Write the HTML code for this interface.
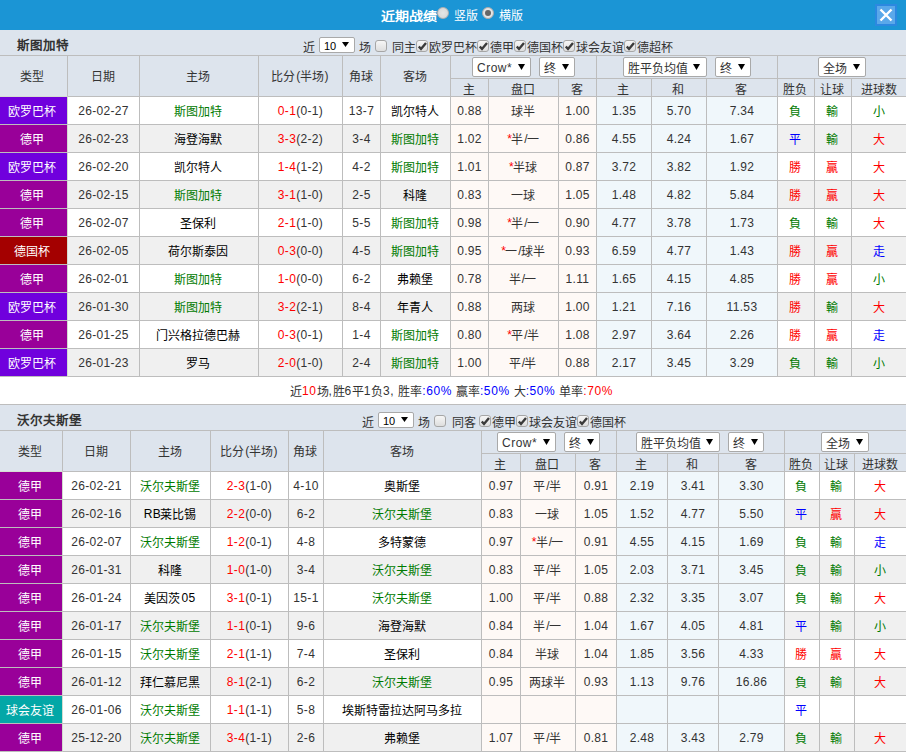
<!DOCTYPE html><html lang="zh-CN"><head><meta charset="utf-8"><title>近期战绩</title><style>
*{margin:0;padding:0;box-sizing:border-box}
html,body{width:906px;height:753px;overflow:hidden;background:#fff}
body{position:relative;font-family:"Liberation Sans",sans-serif;font-size:12px;color:#333}
.c{position:absolute;border-right:1px solid #bdbdbd;border-bottom:1px solid #bdbdbd;text-align:center;white-space:nowrap;overflow:hidden;letter-spacing:0.33px}
.t{position:absolute;white-space:nowrap}
.sel{position:absolute;background:#fff;border:1px solid #a9a9a9;border-radius:2px;height:20px;line-height:20px;padding-left:4px;white-space:nowrap;letter-spacing:0.5px}
.sel i{position:absolute;font-style:normal;font-size:8px;top:0}
.cb{position:absolute;width:12px;height:12px;border:1px solid #a6a6a6;border-radius:3px;background:linear-gradient(#f6f6f6,#dedede)}
.s16{position:absolute;background:#fff;border:1px solid #a9a9a9;border-radius:2px;width:36px;height:16px;line-height:14px;padding-left:4px;padding-top:1px;font-size:11px;color:#000}
.k{position:relative;top:1px;letter-spacing:0}
.c .k{left:-1px}
.g{color:#007a00}.r{color:#ff0000}.b{color:#0000ff}
</style></head><body>
<div style="position:absolute;left:0;top:0;width:906px;height:30px;background:#1b95d5"></div>
<div class="t" style="left:381px;top:9px;font-size:14px;font-weight:bold;color:#fff;line-height:16px;transform:scaleY(0.88);transform-origin:0 0"><span class="k">近期战绩</span></div>
<div style="position:absolute;left:437px;top:7px;width:12px;height:12px;border-radius:50%;background:radial-gradient(#e6e6e6,#d4d4d4);border:1px solid #b0b0b0"></div>
<div class="t" style="left:454px;top:8px;color:#fff;line-height:14px"><span class="k">竖版</span></div>
<div style="position:absolute;left:482px;top:7px;width:12px;height:12px;border-radius:50%;background:#e4e4e4;border:1px solid #aaa"><div style="position:absolute;left:2px;top:2px;width:6px;height:6px;border-radius:50%;background:#666"></div></div>
<div class="t" style="left:499px;top:8px;color:#fff;line-height:14px"><span class="k">横版</span></div>
<div style="position:absolute;left:875px;top:4px;width:22px;height:22px;background:#5aa8ea;border:2px solid #2c88e0"><svg width="18" height="18" style="position:absolute;left:0;top:0"><path d="M3.5 3.5L14.5 14.5M14.5 3.5L3.5 14.5" stroke="#fff" stroke-width="2.4"/></svg></div>
<div class="c" style="left:0;top:30px;width:906px;height:26px;background:#dde4ed;border-right:0"></div>
<div class="t" style="left:17px;top:37px;font-size:12.5px;font-weight:bold;line-height:16px"><span class="k">斯图加特</span></div>
<div class="t" style="left:303px;top:40px;line-height:14px"><span class="k">近</span></div>
<div class="s16" style="left:319px;top:37px">10<svg width="7" height="5" style="position:absolute;left:22px;top:4px"><path d="M0 0H7L3.5 5Z" fill="#000"/></svg></div>
<div class="t" style="left:359px;top:40px;line-height:14px"><span class="k">场</span></div>
<div class="cb" style="left:375px;top:40px"></div>
<div class="t" style="left:392px;top:40px;line-height:14px"><span class="k">同主</span></div>
<div class="cb" style="left:416px;top:40px"><svg width="10" height="10" style="position:absolute;left:0;top:0"><path d="M1.8 5.5 L4 8 L9 2" stroke="#3a3a3a" stroke-width="2.4" fill="none"/></svg></div>
<div class="t" style="left:429px;top:40px;line-height:14px"><span class="k">欧罗巴杯</span></div>
<div class="cb" style="left:477px;top:40px"><svg width="10" height="10" style="position:absolute;left:0;top:0"><path d="M1.8 5.5 L4 8 L9 2" stroke="#3a3a3a" stroke-width="2.4" fill="none"/></svg></div>
<div class="t" style="left:490px;top:40px;line-height:14px"><span class="k">德甲</span></div>
<div class="cb" style="left:514px;top:40px"><svg width="10" height="10" style="position:absolute;left:0;top:0"><path d="M1.8 5.5 L4 8 L9 2" stroke="#3a3a3a" stroke-width="2.4" fill="none"/></svg></div>
<div class="t" style="left:527px;top:40px;line-height:14px"><span class="k">德国杯</span></div>
<div class="cb" style="left:563px;top:40px"><svg width="10" height="10" style="position:absolute;left:0;top:0"><path d="M1.8 5.5 L4 8 L9 2" stroke="#3a3a3a" stroke-width="2.4" fill="none"/></svg></div>
<div class="t" style="left:576px;top:40px;line-height:14px"><span class="k">球会友谊</span></div>
<div class="cb" style="left:624px;top:40px"><svg width="10" height="10" style="position:absolute;left:0;top:0"><path d="M1.8 5.5 L4 8 L9 2" stroke="#3a3a3a" stroke-width="2.4" fill="none"/></svg></div>
<div class="t" style="left:637px;top:40px;line-height:14px"><span class="k">德超杯</span></div>
<div class="c" style="left:0px;top:56px;width:68px;height:41px;line-height:42px;background:#dde4ed;padding-right:1px;border-bottom-color:#d6ddd3;line-height:40px;"><span class="k">类型</span></div>
<div class="c" style="left:68px;top:56px;width:72px;height:41px;line-height:42px;background:#dde4ed;line-height:40px;"><span class="k">日期</span></div>
<div class="c" style="left:140px;top:56px;width:119px;height:41px;line-height:42px;background:#dde4ed;line-height:40px;"><span class="k">主场</span></div>
<div class="c" style="left:259px;top:56px;width:84px;height:41px;line-height:42px;background:#dde4ed;line-height:40px;"><span class="k">比分</span>(<span class="k">半场</span>)</div>
<div class="c" style="left:343px;top:56px;width:38px;height:41px;line-height:42px;background:#dde4ed;line-height:40px;"><span class="k">角球</span></div>
<div class="c" style="left:381px;top:56px;width:70px;height:41px;line-height:42px;background:#dde4ed;line-height:40px;"><span class="k">客场</span></div>
<div class="c" style="left:451px;top:56px;width:146px;height:23px;line-height:24px;background:#dde4ed;"></div>
<div class="c" style="left:597px;top:56px;width:181px;height:23px;line-height:24px;background:#dde4ed;"></div>
<div class="c" style="left:778px;top:56px;width:129px;height:23px;line-height:24px;background:#dde4ed;border-right:0;"></div>
<div class="c" style="left:451px;top:79px;width:38px;height:18px;line-height:19px;background:#dde4ed;line-height:17px;padding-top:2px;"><span class="k">主</span></div>
<div class="c" style="left:489px;top:79px;width:70px;height:18px;line-height:19px;background:#dde4ed;line-height:17px;padding-top:2px;"><span class="k">盘口</span></div>
<div class="c" style="left:559px;top:79px;width:38px;height:18px;line-height:19px;background:#dde4ed;line-height:17px;padding-top:2px;"><span class="k">客</span></div>
<div class="c" style="left:597px;top:79px;width:55px;height:18px;line-height:19px;background:#dde4ed;line-height:17px;padding-top:2px;"><span class="k">主</span></div>
<div class="c" style="left:652px;top:79px;width:55px;height:18px;line-height:19px;background:#dde4ed;line-height:17px;padding-top:2px;"><span class="k">和</span></div>
<div class="c" style="left:707px;top:79px;width:71px;height:18px;line-height:19px;background:#dde4ed;line-height:17px;padding-top:2px;"><span class="k">客</span></div>
<div class="c" style="left:778px;top:79px;width:37px;height:18px;line-height:19px;background:#dde4ed;line-height:17px;padding-top:2px;"><span class="k">胜负</span></div>
<div class="c" style="left:815px;top:79px;width:37px;height:18px;line-height:19px;background:#dde4ed;line-height:17px;padding-top:2px;"><span class="k">让球</span></div>
<div class="c" style="left:852px;top:79px;width:55px;height:18px;line-height:19px;background:#dde4ed;border-right:0;line-height:17px;padding-top:2px;"><span class="k">进球数</span></div>
<div class="sel" style="left:472px;top:57px;width:59px">Crow*<svg width="7" height="6" style="position:absolute;left:45px;top:6px"><path d="M0 0H7L3.5 6Z" fill="#000"/></svg></div>
<div class="sel" style="left:539px;top:57px;width:36px"><span class="k">终</span><svg width="7" height="6" style="position:absolute;left:22px;top:6px"><path d="M0 0H7L3.5 6Z" fill="#000"/></svg></div>
<div class="sel" style="left:623px;top:57px;width:84px"><span class="k">胜平负均值</span><svg width="7" height="6" style="position:absolute;left:69px;top:6px"><path d="M0 0H7L3.5 6Z" fill="#000"/></svg></div>
<div class="sel" style="left:715px;top:57px;width:36px"><span class="k">终</span><svg width="7" height="6" style="position:absolute;left:22px;top:6px"><path d="M0 0H7L3.5 6Z" fill="#000"/></svg></div>
<div class="sel" style="left:818px;top:57px;width:48px"><span class="k">全场</span><svg width="7" height="6" style="position:absolute;left:34px;top:6px"><path d="M0 0H7L3.5 6Z" fill="#000"/></svg></div>
<div class="c" style="left:0px;top:97px;width:68px;height:28px;line-height:29px;background:#7000dd;color:#fff;padding-right:1px;border-right-color:#d3dccf;"><span class="k">欧罗巴杯</span></div>
<div class="c" style="left:68px;top:97px;width:72px;height:28px;line-height:29px;background:#fff;">26-02-27</div>
<div class="c" style="left:140px;top:97px;width:119px;height:28px;line-height:29px;background:#fff;color:#007a00;"><span class="k">斯图加特</span></div>
<div class="c" style="left:259px;top:97px;width:84px;height:28px;line-height:29px;background:#fff;"><span class="r">0-1</span>(0-1)</div>
<div class="c" style="left:343px;top:97px;width:38px;height:28px;line-height:29px;background:#fff;">13-7</div>
<div class="c" style="left:381px;top:97px;width:70px;height:28px;line-height:29px;background:#fff;color:#000;"><span class="k">凯尔特人</span></div>
<div class="c" style="left:451px;top:97px;width:38px;height:28px;line-height:29px;background:#fef9f6;">0.88</div>
<div class="c" style="left:489px;top:97px;width:70px;height:28px;line-height:29px;background:#fef9f6;"><span class="k">球半</span></div>
<div class="c" style="left:559px;top:97px;width:38px;height:28px;line-height:29px;background:#fef9f6;">1.00</div>
<div class="c" style="left:597px;top:97px;width:55px;height:28px;line-height:29px;background:#f0f7fb;">1.35</div>
<div class="c" style="left:652px;top:97px;width:55px;height:28px;line-height:29px;background:#f0f7fb;">5.70</div>
<div class="c" style="left:707px;top:97px;width:71px;height:28px;line-height:29px;background:#f0f7fb;">7.34</div>
<div class="c" style="left:778px;top:97px;width:37px;height:28px;line-height:29px;background:#fff;"><span class="g"><span class="k">負</span></span></div>
<div class="c" style="left:815px;top:97px;width:37px;height:28px;line-height:29px;background:#fff;"><span class="g"><span class="k">輸</span></span></div>
<div class="c" style="left:852px;top:97px;width:55px;height:28px;line-height:29px;background:#fff;border-right:0;"><span class="g"><span class="k">小</span></span></div>
<div class="c" style="left:0px;top:125px;width:68px;height:28px;line-height:29px;background:#990099;color:#fff;padding-right:1px;border-right-color:#d3dccf;"><span class="k">德甲</span></div>
<div class="c" style="left:68px;top:125px;width:72px;height:28px;line-height:29px;background:#f0f0f0;">26-02-23</div>
<div class="c" style="left:140px;top:125px;width:119px;height:28px;line-height:29px;background:#f0f0f0;color:#000;"><span class="k">海登海默</span></div>
<div class="c" style="left:259px;top:125px;width:84px;height:28px;line-height:29px;background:#f0f0f0;"><span class="r">3-3</span>(2-2)</div>
<div class="c" style="left:343px;top:125px;width:38px;height:28px;line-height:29px;background:#f0f0f0;">3-4</div>
<div class="c" style="left:381px;top:125px;width:70px;height:28px;line-height:29px;background:#f0f0f0;color:#007a00;"><span class="k">斯图加特</span></div>
<div class="c" style="left:451px;top:125px;width:38px;height:28px;line-height:29px;background:#fef9f6;">1.02</div>
<div class="c" style="left:489px;top:125px;width:70px;height:28px;line-height:29px;background:#fef9f6;"><span class="r">*</span><span class="k">半</span>/<span class="k">一</span></div>
<div class="c" style="left:559px;top:125px;width:38px;height:28px;line-height:29px;background:#fef9f6;">0.86</div>
<div class="c" style="left:597px;top:125px;width:55px;height:28px;line-height:29px;background:#f0f7fb;">4.55</div>
<div class="c" style="left:652px;top:125px;width:55px;height:28px;line-height:29px;background:#f0f7fb;">4.24</div>
<div class="c" style="left:707px;top:125px;width:71px;height:28px;line-height:29px;background:#f0f7fb;">1.67</div>
<div class="c" style="left:778px;top:125px;width:37px;height:28px;line-height:29px;background:#f0f0f0;"><span class="b"><span class="k">平</span></span></div>
<div class="c" style="left:815px;top:125px;width:37px;height:28px;line-height:29px;background:#f0f0f0;"><span class="g"><span class="k">輸</span></span></div>
<div class="c" style="left:852px;top:125px;width:55px;height:28px;line-height:29px;background:#f0f0f0;border-right:0;"><span class="r"><span class="k">大</span></span></div>
<div class="c" style="left:0px;top:153px;width:68px;height:28px;line-height:29px;background:#7000dd;color:#fff;padding-right:1px;border-right-color:#d3dccf;"><span class="k">欧罗巴杯</span></div>
<div class="c" style="left:68px;top:153px;width:72px;height:28px;line-height:29px;background:#fff;">26-02-20</div>
<div class="c" style="left:140px;top:153px;width:119px;height:28px;line-height:29px;background:#fff;color:#000;"><span class="k">凯尔特人</span></div>
<div class="c" style="left:259px;top:153px;width:84px;height:28px;line-height:29px;background:#fff;"><span class="r">1-4</span>(1-2)</div>
<div class="c" style="left:343px;top:153px;width:38px;height:28px;line-height:29px;background:#fff;">4-2</div>
<div class="c" style="left:381px;top:153px;width:70px;height:28px;line-height:29px;background:#fff;color:#007a00;"><span class="k">斯图加特</span></div>
<div class="c" style="left:451px;top:153px;width:38px;height:28px;line-height:29px;background:#fef9f6;">1.01</div>
<div class="c" style="left:489px;top:153px;width:70px;height:28px;line-height:29px;background:#fef9f6;"><span class="r">*</span><span class="k">半球</span></div>
<div class="c" style="left:559px;top:153px;width:38px;height:28px;line-height:29px;background:#fef9f6;">0.87</div>
<div class="c" style="left:597px;top:153px;width:55px;height:28px;line-height:29px;background:#f0f7fb;">3.72</div>
<div class="c" style="left:652px;top:153px;width:55px;height:28px;line-height:29px;background:#f0f7fb;">3.82</div>
<div class="c" style="left:707px;top:153px;width:71px;height:28px;line-height:29px;background:#f0f7fb;">1.92</div>
<div class="c" style="left:778px;top:153px;width:37px;height:28px;line-height:29px;background:#fff;"><span class="r"><span class="k">勝</span></span></div>
<div class="c" style="left:815px;top:153px;width:37px;height:28px;line-height:29px;background:#fff;"><span class="r"><span class="k">贏</span></span></div>
<div class="c" style="left:852px;top:153px;width:55px;height:28px;line-height:29px;background:#fff;border-right:0;"><span class="r"><span class="k">大</span></span></div>
<div class="c" style="left:0px;top:181px;width:68px;height:28px;line-height:29px;background:#990099;color:#fff;padding-right:1px;border-right-color:#d3dccf;"><span class="k">德甲</span></div>
<div class="c" style="left:68px;top:181px;width:72px;height:28px;line-height:29px;background:#f0f0f0;">26-02-15</div>
<div class="c" style="left:140px;top:181px;width:119px;height:28px;line-height:29px;background:#f0f0f0;color:#007a00;"><span class="k">斯图加特</span></div>
<div class="c" style="left:259px;top:181px;width:84px;height:28px;line-height:29px;background:#f0f0f0;"><span class="r">3-1</span>(1-0)</div>
<div class="c" style="left:343px;top:181px;width:38px;height:28px;line-height:29px;background:#f0f0f0;">2-5</div>
<div class="c" style="left:381px;top:181px;width:70px;height:28px;line-height:29px;background:#f0f0f0;color:#000;"><span class="k">科隆</span></div>
<div class="c" style="left:451px;top:181px;width:38px;height:28px;line-height:29px;background:#fef9f6;">0.83</div>
<div class="c" style="left:489px;top:181px;width:70px;height:28px;line-height:29px;background:#fef9f6;"><span class="k">一球</span></div>
<div class="c" style="left:559px;top:181px;width:38px;height:28px;line-height:29px;background:#fef9f6;">1.05</div>
<div class="c" style="left:597px;top:181px;width:55px;height:28px;line-height:29px;background:#f0f7fb;">1.48</div>
<div class="c" style="left:652px;top:181px;width:55px;height:28px;line-height:29px;background:#f0f7fb;">4.82</div>
<div class="c" style="left:707px;top:181px;width:71px;height:28px;line-height:29px;background:#f0f7fb;">5.84</div>
<div class="c" style="left:778px;top:181px;width:37px;height:28px;line-height:29px;background:#f0f0f0;"><span class="r"><span class="k">勝</span></span></div>
<div class="c" style="left:815px;top:181px;width:37px;height:28px;line-height:29px;background:#f0f0f0;"><span class="r"><span class="k">贏</span></span></div>
<div class="c" style="left:852px;top:181px;width:55px;height:28px;line-height:29px;background:#f0f0f0;border-right:0;"><span class="r"><span class="k">大</span></span></div>
<div class="c" style="left:0px;top:209px;width:68px;height:28px;line-height:29px;background:#990099;color:#fff;padding-right:1px;border-right-color:#d3dccf;"><span class="k">德甲</span></div>
<div class="c" style="left:68px;top:209px;width:72px;height:28px;line-height:29px;background:#fff;">26-02-07</div>
<div class="c" style="left:140px;top:209px;width:119px;height:28px;line-height:29px;background:#fff;color:#000;"><span class="k">圣保利</span></div>
<div class="c" style="left:259px;top:209px;width:84px;height:28px;line-height:29px;background:#fff;"><span class="r">2-1</span>(1-0)</div>
<div class="c" style="left:343px;top:209px;width:38px;height:28px;line-height:29px;background:#fff;">5-5</div>
<div class="c" style="left:381px;top:209px;width:70px;height:28px;line-height:29px;background:#fff;color:#007a00;"><span class="k">斯图加特</span></div>
<div class="c" style="left:451px;top:209px;width:38px;height:28px;line-height:29px;background:#fef9f6;">0.98</div>
<div class="c" style="left:489px;top:209px;width:70px;height:28px;line-height:29px;background:#fef9f6;"><span class="r">*</span><span class="k">半</span>/<span class="k">一</span></div>
<div class="c" style="left:559px;top:209px;width:38px;height:28px;line-height:29px;background:#fef9f6;">0.90</div>
<div class="c" style="left:597px;top:209px;width:55px;height:28px;line-height:29px;background:#f0f7fb;">4.77</div>
<div class="c" style="left:652px;top:209px;width:55px;height:28px;line-height:29px;background:#f0f7fb;">3.78</div>
<div class="c" style="left:707px;top:209px;width:71px;height:28px;line-height:29px;background:#f0f7fb;">1.73</div>
<div class="c" style="left:778px;top:209px;width:37px;height:28px;line-height:29px;background:#fff;"><span class="g"><span class="k">負</span></span></div>
<div class="c" style="left:815px;top:209px;width:37px;height:28px;line-height:29px;background:#fff;"><span class="g"><span class="k">輸</span></span></div>
<div class="c" style="left:852px;top:209px;width:55px;height:28px;line-height:29px;background:#fff;border-right:0;"><span class="r"><span class="k">大</span></span></div>
<div class="c" style="left:0px;top:237px;width:68px;height:28px;line-height:29px;background:#a40000;color:#fff;padding-right:1px;border-right-color:#d3dccf;"><span class="k">德国杯</span></div>
<div class="c" style="left:68px;top:237px;width:72px;height:28px;line-height:29px;background:#f0f0f0;">26-02-05</div>
<div class="c" style="left:140px;top:237px;width:119px;height:28px;line-height:29px;background:#f0f0f0;color:#000;"><span class="k">荷尔斯泰因</span></div>
<div class="c" style="left:259px;top:237px;width:84px;height:28px;line-height:29px;background:#f0f0f0;"><span class="r">0-3</span>(0-0)</div>
<div class="c" style="left:343px;top:237px;width:38px;height:28px;line-height:29px;background:#f0f0f0;">4-5</div>
<div class="c" style="left:381px;top:237px;width:70px;height:28px;line-height:29px;background:#f0f0f0;color:#007a00;"><span class="k">斯图加特</span></div>
<div class="c" style="left:451px;top:237px;width:38px;height:28px;line-height:29px;background:#fef9f6;">0.95</div>
<div class="c" style="left:489px;top:237px;width:70px;height:28px;line-height:29px;background:#fef9f6;"><span class="r">*</span><span class="k">一</span>/<span class="k">球半</span></div>
<div class="c" style="left:559px;top:237px;width:38px;height:28px;line-height:29px;background:#fef9f6;">0.93</div>
<div class="c" style="left:597px;top:237px;width:55px;height:28px;line-height:29px;background:#f0f7fb;">6.59</div>
<div class="c" style="left:652px;top:237px;width:55px;height:28px;line-height:29px;background:#f0f7fb;">4.77</div>
<div class="c" style="left:707px;top:237px;width:71px;height:28px;line-height:29px;background:#f0f7fb;">1.43</div>
<div class="c" style="left:778px;top:237px;width:37px;height:28px;line-height:29px;background:#f0f0f0;"><span class="r"><span class="k">勝</span></span></div>
<div class="c" style="left:815px;top:237px;width:37px;height:28px;line-height:29px;background:#f0f0f0;"><span class="r"><span class="k">贏</span></span></div>
<div class="c" style="left:852px;top:237px;width:55px;height:28px;line-height:29px;background:#f0f0f0;border-right:0;"><span class="b"><span class="k">走</span></span></div>
<div class="c" style="left:0px;top:265px;width:68px;height:28px;line-height:29px;background:#990099;color:#fff;padding-right:1px;border-right-color:#d3dccf;"><span class="k">德甲</span></div>
<div class="c" style="left:68px;top:265px;width:72px;height:28px;line-height:29px;background:#fff;">26-02-01</div>
<div class="c" style="left:140px;top:265px;width:119px;height:28px;line-height:29px;background:#fff;color:#007a00;"><span class="k">斯图加特</span></div>
<div class="c" style="left:259px;top:265px;width:84px;height:28px;line-height:29px;background:#fff;"><span class="r">1-0</span>(0-0)</div>
<div class="c" style="left:343px;top:265px;width:38px;height:28px;line-height:29px;background:#fff;">6-2</div>
<div class="c" style="left:381px;top:265px;width:70px;height:28px;line-height:29px;background:#fff;color:#000;"><span class="k">弗赖堡</span></div>
<div class="c" style="left:451px;top:265px;width:38px;height:28px;line-height:29px;background:#fef9f6;">0.78</div>
<div class="c" style="left:489px;top:265px;width:70px;height:28px;line-height:29px;background:#fef9f6;"><span class="k">半</span>/<span class="k">一</span></div>
<div class="c" style="left:559px;top:265px;width:38px;height:28px;line-height:29px;background:#fef9f6;">1.11</div>
<div class="c" style="left:597px;top:265px;width:55px;height:28px;line-height:29px;background:#f0f7fb;">1.65</div>
<div class="c" style="left:652px;top:265px;width:55px;height:28px;line-height:29px;background:#f0f7fb;">4.15</div>
<div class="c" style="left:707px;top:265px;width:71px;height:28px;line-height:29px;background:#f0f7fb;">4.85</div>
<div class="c" style="left:778px;top:265px;width:37px;height:28px;line-height:29px;background:#fff;"><span class="r"><span class="k">勝</span></span></div>
<div class="c" style="left:815px;top:265px;width:37px;height:28px;line-height:29px;background:#fff;"><span class="r"><span class="k">贏</span></span></div>
<div class="c" style="left:852px;top:265px;width:55px;height:28px;line-height:29px;background:#fff;border-right:0;"><span class="g"><span class="k">小</span></span></div>
<div class="c" style="left:0px;top:293px;width:68px;height:28px;line-height:29px;background:#7000dd;color:#fff;padding-right:1px;border-right-color:#d3dccf;"><span class="k">欧罗巴杯</span></div>
<div class="c" style="left:68px;top:293px;width:72px;height:28px;line-height:29px;background:#f0f0f0;">26-01-30</div>
<div class="c" style="left:140px;top:293px;width:119px;height:28px;line-height:29px;background:#f0f0f0;color:#007a00;"><span class="k">斯图加特</span></div>
<div class="c" style="left:259px;top:293px;width:84px;height:28px;line-height:29px;background:#f0f0f0;"><span class="r">3-2</span>(2-1)</div>
<div class="c" style="left:343px;top:293px;width:38px;height:28px;line-height:29px;background:#f0f0f0;">8-4</div>
<div class="c" style="left:381px;top:293px;width:70px;height:28px;line-height:29px;background:#f0f0f0;color:#000;"><span class="k">年青人</span></div>
<div class="c" style="left:451px;top:293px;width:38px;height:28px;line-height:29px;background:#fef9f6;">0.88</div>
<div class="c" style="left:489px;top:293px;width:70px;height:28px;line-height:29px;background:#fef9f6;"><span class="k">两球</span></div>
<div class="c" style="left:559px;top:293px;width:38px;height:28px;line-height:29px;background:#fef9f6;">1.00</div>
<div class="c" style="left:597px;top:293px;width:55px;height:28px;line-height:29px;background:#f0f7fb;">1.21</div>
<div class="c" style="left:652px;top:293px;width:55px;height:28px;line-height:29px;background:#f0f7fb;">7.16</div>
<div class="c" style="left:707px;top:293px;width:71px;height:28px;line-height:29px;background:#f0f7fb;">11.53</div>
<div class="c" style="left:778px;top:293px;width:37px;height:28px;line-height:29px;background:#f0f0f0;"><span class="r"><span class="k">勝</span></span></div>
<div class="c" style="left:815px;top:293px;width:37px;height:28px;line-height:29px;background:#f0f0f0;"><span class="g"><span class="k">輸</span></span></div>
<div class="c" style="left:852px;top:293px;width:55px;height:28px;line-height:29px;background:#f0f0f0;border-right:0;"><span class="r"><span class="k">大</span></span></div>
<div class="c" style="left:0px;top:321px;width:68px;height:28px;line-height:29px;background:#990099;color:#fff;padding-right:1px;border-right-color:#d3dccf;"><span class="k">德甲</span></div>
<div class="c" style="left:68px;top:321px;width:72px;height:28px;line-height:29px;background:#fff;">26-01-25</div>
<div class="c" style="left:140px;top:321px;width:119px;height:28px;line-height:29px;background:#fff;color:#000;"><span class="k">门兴格拉德巴赫</span></div>
<div class="c" style="left:259px;top:321px;width:84px;height:28px;line-height:29px;background:#fff;"><span class="r">0-3</span>(0-1)</div>
<div class="c" style="left:343px;top:321px;width:38px;height:28px;line-height:29px;background:#fff;">1-4</div>
<div class="c" style="left:381px;top:321px;width:70px;height:28px;line-height:29px;background:#fff;color:#007a00;"><span class="k">斯图加特</span></div>
<div class="c" style="left:451px;top:321px;width:38px;height:28px;line-height:29px;background:#fef9f6;">0.80</div>
<div class="c" style="left:489px;top:321px;width:70px;height:28px;line-height:29px;background:#fef9f6;"><span class="r">*</span><span class="k">平</span>/<span class="k">半</span></div>
<div class="c" style="left:559px;top:321px;width:38px;height:28px;line-height:29px;background:#fef9f6;">1.08</div>
<div class="c" style="left:597px;top:321px;width:55px;height:28px;line-height:29px;background:#f0f7fb;">2.97</div>
<div class="c" style="left:652px;top:321px;width:55px;height:28px;line-height:29px;background:#f0f7fb;">3.64</div>
<div class="c" style="left:707px;top:321px;width:71px;height:28px;line-height:29px;background:#f0f7fb;">2.26</div>
<div class="c" style="left:778px;top:321px;width:37px;height:28px;line-height:29px;background:#fff;"><span class="r"><span class="k">勝</span></span></div>
<div class="c" style="left:815px;top:321px;width:37px;height:28px;line-height:29px;background:#fff;"><span class="r"><span class="k">贏</span></span></div>
<div class="c" style="left:852px;top:321px;width:55px;height:28px;line-height:29px;background:#fff;border-right:0;"><span class="b"><span class="k">走</span></span></div>
<div class="c" style="left:0px;top:349px;width:68px;height:28px;line-height:29px;background:#7000dd;color:#fff;padding-right:1px;border-right-color:#d3dccf;"><span class="k">欧罗巴杯</span></div>
<div class="c" style="left:68px;top:349px;width:72px;height:28px;line-height:29px;background:#f0f0f0;">26-01-23</div>
<div class="c" style="left:140px;top:349px;width:119px;height:28px;line-height:29px;background:#f0f0f0;color:#000;"><span class="k">罗马</span></div>
<div class="c" style="left:259px;top:349px;width:84px;height:28px;line-height:29px;background:#f0f0f0;"><span class="r">2-0</span>(1-0)</div>
<div class="c" style="left:343px;top:349px;width:38px;height:28px;line-height:29px;background:#f0f0f0;">2-4</div>
<div class="c" style="left:381px;top:349px;width:70px;height:28px;line-height:29px;background:#f0f0f0;color:#007a00;"><span class="k">斯图加特</span></div>
<div class="c" style="left:451px;top:349px;width:38px;height:28px;line-height:29px;background:#fef9f6;">1.00</div>
<div class="c" style="left:489px;top:349px;width:70px;height:28px;line-height:29px;background:#fef9f6;"><span class="k">平</span>/<span class="k">半</span></div>
<div class="c" style="left:559px;top:349px;width:38px;height:28px;line-height:29px;background:#fef9f6;">0.88</div>
<div class="c" style="left:597px;top:349px;width:55px;height:28px;line-height:29px;background:#f0f7fb;">2.17</div>
<div class="c" style="left:652px;top:349px;width:55px;height:28px;line-height:29px;background:#f0f7fb;">3.45</div>
<div class="c" style="left:707px;top:349px;width:71px;height:28px;line-height:29px;background:#f0f7fb;">3.29</div>
<div class="c" style="left:778px;top:349px;width:37px;height:28px;line-height:29px;background:#f0f0f0;"><span class="g"><span class="k">負</span></span></div>
<div class="c" style="left:815px;top:349px;width:37px;height:28px;line-height:29px;background:#f0f0f0;"><span class="g"><span class="k">輸</span></span></div>
<div class="c" style="left:852px;top:349px;width:55px;height:28px;line-height:29px;background:#f0f0f0;border-right:0;"><span class="g"><span class="k">小</span></span></div>
<div class="t" style="left:290px;top:383px;line-height:16px;color:#333;letter-spacing:0.6px"><span class="k">近</span><span class="r">10</span><span class="k">场</span>,<span class="k">胜</span>6<span class="k">平</span>1<span class="k">负</span>3, <span class="k">胜率</span><span class="b">:60%</span> <span class="k">赢率</span><span class="b">:50%</span> <span class="k">大</span><span class="b">:50%</span> <span class="k">单率</span><span class="r">:70%</span></div>
<div style="position:absolute;left:0;top:404px;width:906px;height:1px;background:#bdbdbd"></div>
<div class="c" style="left:0;top:405px;width:906px;height:26px;background:#dde4ed;border-right:0"></div>
<div class="t" style="left:17px;top:412px;font-size:12.5px;font-weight:bold;line-height:16px"><span class="k">沃尔夫斯堡</span></div>
<div class="t" style="left:362px;top:415px;line-height:14px"><span class="k">近</span></div>
<div class="s16" style="left:378px;top:412px">10<svg width="7" height="5" style="position:absolute;left:22px;top:4px"><path d="M0 0H7L3.5 5Z" fill="#000"/></svg></div>
<div class="t" style="left:418px;top:415px;line-height:14px"><span class="k">场</span></div>
<div class="cb" style="left:434px;top:415px"></div>
<div class="t" style="left:452px;top:415px;line-height:14px"><span class="k">同客</span></div>
<div class="cb" style="left:479px;top:415px"><svg width="10" height="10" style="position:absolute;left:0;top:0"><path d="M1.8 5.5 L4 8 L9 2" stroke="#3a3a3a" stroke-width="2.4" fill="none"/></svg></div>
<div class="t" style="left:492px;top:415px;line-height:14px"><span class="k">德甲</span></div>
<div class="cb" style="left:516px;top:415px"><svg width="10" height="10" style="position:absolute;left:0;top:0"><path d="M1.8 5.5 L4 8 L9 2" stroke="#3a3a3a" stroke-width="2.4" fill="none"/></svg></div>
<div class="t" style="left:529px;top:415px;line-height:14px"><span class="k">球会友谊</span></div>
<div class="cb" style="left:577px;top:415px"><svg width="10" height="10" style="position:absolute;left:0;top:0"><path d="M1.8 5.5 L4 8 L9 2" stroke="#3a3a3a" stroke-width="2.4" fill="none"/></svg></div>
<div class="t" style="left:590px;top:415px;line-height:14px"><span class="k">德国杯</span></div>
<div class="c" style="left:0px;top:431px;width:63px;height:41px;line-height:42px;background:#dde4ed;padding-right:1px;border-bottom-color:#d6ddd3;line-height:40px;"><span class="k">类型</span></div>
<div class="c" style="left:63px;top:431px;width:68px;height:41px;line-height:42px;background:#dde4ed;line-height:40px;"><span class="k">日期</span></div>
<div class="c" style="left:131px;top:431px;width:80px;height:41px;line-height:42px;background:#dde4ed;line-height:40px;"><span class="k">主场</span></div>
<div class="c" style="left:211px;top:431px;width:78px;height:41px;line-height:42px;background:#dde4ed;line-height:40px;"><span class="k">比分</span>(<span class="k">半场</span>)</div>
<div class="c" style="left:289px;top:431px;width:35px;height:41px;line-height:42px;background:#dde4ed;line-height:40px;"><span class="k">角球</span></div>
<div class="c" style="left:324px;top:431px;width:158px;height:41px;line-height:42px;background:#dde4ed;line-height:40px;"><span class="k">客场</span></div>
<div class="c" style="left:482px;top:431px;width:135px;height:23px;line-height:24px;background:#dde4ed;"></div>
<div class="c" style="left:617px;top:431px;width:168px;height:23px;line-height:24px;background:#dde4ed;"></div>
<div class="c" style="left:785px;top:431px;width:122px;height:23px;line-height:24px;background:#dde4ed;border-right:0;"></div>
<div class="c" style="left:482px;top:454px;width:39px;height:18px;line-height:19px;background:#dde4ed;line-height:17px;padding-top:2px;"><span class="k">主</span></div>
<div class="c" style="left:521px;top:454px;width:55px;height:18px;line-height:19px;background:#dde4ed;line-height:17px;padding-top:2px;"><span class="k">盘口</span></div>
<div class="c" style="left:576px;top:454px;width:41px;height:18px;line-height:19px;background:#dde4ed;line-height:17px;padding-top:2px;"><span class="k">客</span></div>
<div class="c" style="left:617px;top:454px;width:51px;height:18px;line-height:19px;background:#dde4ed;line-height:17px;padding-top:2px;"><span class="k">主</span></div>
<div class="c" style="left:668px;top:454px;width:51px;height:18px;line-height:19px;background:#dde4ed;line-height:17px;padding-top:2px;"><span class="k">和</span></div>
<div class="c" style="left:719px;top:454px;width:66px;height:18px;line-height:19px;background:#dde4ed;line-height:17px;padding-top:2px;"><span class="k">客</span></div>
<div class="c" style="left:785px;top:454px;width:35px;height:18px;line-height:19px;background:#dde4ed;line-height:17px;padding-top:2px;"><span class="k">胜负</span></div>
<div class="c" style="left:820px;top:454px;width:35px;height:18px;line-height:19px;background:#dde4ed;line-height:17px;padding-top:2px;"><span class="k">让球</span></div>
<div class="c" style="left:855px;top:454px;width:52px;height:18px;line-height:19px;background:#dde4ed;border-right:0;line-height:17px;padding-top:2px;"><span class="k">进球数</span></div>
<div class="sel" style="left:497px;top:432px;width:59px">Crow*<svg width="7" height="6" style="position:absolute;left:45px;top:6px"><path d="M0 0H7L3.5 6Z" fill="#000"/></svg></div>
<div class="sel" style="left:564px;top:432px;width:36px"><span class="k">终</span><svg width="7" height="6" style="position:absolute;left:22px;top:6px"><path d="M0 0H7L3.5 6Z" fill="#000"/></svg></div>
<div class="sel" style="left:636px;top:432px;width:84px"><span class="k">胜平负均值</span><svg width="7" height="6" style="position:absolute;left:69px;top:6px"><path d="M0 0H7L3.5 6Z" fill="#000"/></svg></div>
<div class="sel" style="left:728px;top:432px;width:36px"><span class="k">终</span><svg width="7" height="6" style="position:absolute;left:22px;top:6px"><path d="M0 0H7L3.5 6Z" fill="#000"/></svg></div>
<div class="sel" style="left:821px;top:432px;width:48px"><span class="k">全场</span><svg width="7" height="6" style="position:absolute;left:34px;top:6px"><path d="M0 0H7L3.5 6Z" fill="#000"/></svg></div>
<div class="c" style="left:0px;top:472px;width:63px;height:28px;line-height:29px;background:#990099;color:#fff;padding-right:1px;border-right-color:#d3dccf;"><span class="k">德甲</span></div>
<div class="c" style="left:63px;top:472px;width:68px;height:28px;line-height:29px;background:#fff;">26-02-21</div>
<div class="c" style="left:131px;top:472px;width:80px;height:28px;line-height:29px;background:#fff;color:#007a00;"><span class="k">沃尔夫斯堡</span></div>
<div class="c" style="left:211px;top:472px;width:78px;height:28px;line-height:29px;background:#fff;"><span class="r">2-3</span>(1-0)</div>
<div class="c" style="left:289px;top:472px;width:35px;height:28px;line-height:29px;background:#fff;">4-10</div>
<div class="c" style="left:324px;top:472px;width:158px;height:28px;line-height:29px;background:#fff;color:#000;"><span class="k">奥斯堡</span></div>
<div class="c" style="left:482px;top:472px;width:39px;height:28px;line-height:29px;background:#fef9f6;">0.97</div>
<div class="c" style="left:521px;top:472px;width:55px;height:28px;line-height:29px;background:#fef9f6;"><span class="k">平</span>/<span class="k">半</span></div>
<div class="c" style="left:576px;top:472px;width:41px;height:28px;line-height:29px;background:#fef9f6;">0.91</div>
<div class="c" style="left:617px;top:472px;width:51px;height:28px;line-height:29px;background:#f0f7fb;">2.19</div>
<div class="c" style="left:668px;top:472px;width:51px;height:28px;line-height:29px;background:#f0f7fb;">3.41</div>
<div class="c" style="left:719px;top:472px;width:66px;height:28px;line-height:29px;background:#f0f7fb;">3.30</div>
<div class="c" style="left:785px;top:472px;width:35px;height:28px;line-height:29px;background:#fff;"><span class="g"><span class="k">負</span></span></div>
<div class="c" style="left:820px;top:472px;width:35px;height:28px;line-height:29px;background:#fff;"><span class="g"><span class="k">輸</span></span></div>
<div class="c" style="left:855px;top:472px;width:52px;height:28px;line-height:29px;background:#fff;border-right:0;"><span class="r"><span class="k">大</span></span></div>
<div class="c" style="left:0px;top:500px;width:63px;height:28px;line-height:29px;background:#990099;color:#fff;padding-right:1px;border-right-color:#d3dccf;"><span class="k">德甲</span></div>
<div class="c" style="left:63px;top:500px;width:68px;height:28px;line-height:29px;background:#f0f0f0;">26-02-16</div>
<div class="c" style="left:131px;top:500px;width:80px;height:28px;line-height:29px;background:#f0f0f0;color:#000;">RB<span class="k">莱比锡</span></div>
<div class="c" style="left:211px;top:500px;width:78px;height:28px;line-height:29px;background:#f0f0f0;"><span class="r">2-2</span>(0-0)</div>
<div class="c" style="left:289px;top:500px;width:35px;height:28px;line-height:29px;background:#f0f0f0;">6-2</div>
<div class="c" style="left:324px;top:500px;width:158px;height:28px;line-height:29px;background:#f0f0f0;color:#007a00;"><span class="k">沃尔夫斯堡</span></div>
<div class="c" style="left:482px;top:500px;width:39px;height:28px;line-height:29px;background:#fef9f6;">0.83</div>
<div class="c" style="left:521px;top:500px;width:55px;height:28px;line-height:29px;background:#fef9f6;"><span class="k">一球</span></div>
<div class="c" style="left:576px;top:500px;width:41px;height:28px;line-height:29px;background:#fef9f6;">1.05</div>
<div class="c" style="left:617px;top:500px;width:51px;height:28px;line-height:29px;background:#f0f7fb;">1.52</div>
<div class="c" style="left:668px;top:500px;width:51px;height:28px;line-height:29px;background:#f0f7fb;">4.77</div>
<div class="c" style="left:719px;top:500px;width:66px;height:28px;line-height:29px;background:#f0f7fb;">5.50</div>
<div class="c" style="left:785px;top:500px;width:35px;height:28px;line-height:29px;background:#f0f0f0;"><span class="b"><span class="k">平</span></span></div>
<div class="c" style="left:820px;top:500px;width:35px;height:28px;line-height:29px;background:#f0f0f0;"><span class="r"><span class="k">贏</span></span></div>
<div class="c" style="left:855px;top:500px;width:52px;height:28px;line-height:29px;background:#f0f0f0;border-right:0;"><span class="r"><span class="k">大</span></span></div>
<div class="c" style="left:0px;top:528px;width:63px;height:28px;line-height:29px;background:#990099;color:#fff;padding-right:1px;border-right-color:#d3dccf;"><span class="k">德甲</span></div>
<div class="c" style="left:63px;top:528px;width:68px;height:28px;line-height:29px;background:#fff;">26-02-07</div>
<div class="c" style="left:131px;top:528px;width:80px;height:28px;line-height:29px;background:#fff;color:#007a00;"><span class="k">沃尔夫斯堡</span></div>
<div class="c" style="left:211px;top:528px;width:78px;height:28px;line-height:29px;background:#fff;"><span class="r">1-2</span>(0-1)</div>
<div class="c" style="left:289px;top:528px;width:35px;height:28px;line-height:29px;background:#fff;">4-8</div>
<div class="c" style="left:324px;top:528px;width:158px;height:28px;line-height:29px;background:#fff;color:#000;"><span class="k">多特蒙德</span></div>
<div class="c" style="left:482px;top:528px;width:39px;height:28px;line-height:29px;background:#fef9f6;">0.97</div>
<div class="c" style="left:521px;top:528px;width:55px;height:28px;line-height:29px;background:#fef9f6;"><span class="r">*</span><span class="k">半</span>/<span class="k">一</span></div>
<div class="c" style="left:576px;top:528px;width:41px;height:28px;line-height:29px;background:#fef9f6;">0.91</div>
<div class="c" style="left:617px;top:528px;width:51px;height:28px;line-height:29px;background:#f0f7fb;">4.55</div>
<div class="c" style="left:668px;top:528px;width:51px;height:28px;line-height:29px;background:#f0f7fb;">4.15</div>
<div class="c" style="left:719px;top:528px;width:66px;height:28px;line-height:29px;background:#f0f7fb;">1.69</div>
<div class="c" style="left:785px;top:528px;width:35px;height:28px;line-height:29px;background:#fff;"><span class="g"><span class="k">負</span></span></div>
<div class="c" style="left:820px;top:528px;width:35px;height:28px;line-height:29px;background:#fff;"><span class="g"><span class="k">輸</span></span></div>
<div class="c" style="left:855px;top:528px;width:52px;height:28px;line-height:29px;background:#fff;border-right:0;"><span class="b"><span class="k">走</span></span></div>
<div class="c" style="left:0px;top:556px;width:63px;height:28px;line-height:29px;background:#990099;color:#fff;padding-right:1px;border-right-color:#d3dccf;"><span class="k">德甲</span></div>
<div class="c" style="left:63px;top:556px;width:68px;height:28px;line-height:29px;background:#f0f0f0;">26-01-31</div>
<div class="c" style="left:131px;top:556px;width:80px;height:28px;line-height:29px;background:#f0f0f0;color:#000;"><span class="k">科隆</span></div>
<div class="c" style="left:211px;top:556px;width:78px;height:28px;line-height:29px;background:#f0f0f0;"><span class="r">1-0</span>(1-0)</div>
<div class="c" style="left:289px;top:556px;width:35px;height:28px;line-height:29px;background:#f0f0f0;">3-4</div>
<div class="c" style="left:324px;top:556px;width:158px;height:28px;line-height:29px;background:#f0f0f0;color:#007a00;"><span class="k">沃尔夫斯堡</span></div>
<div class="c" style="left:482px;top:556px;width:39px;height:28px;line-height:29px;background:#fef9f6;">0.83</div>
<div class="c" style="left:521px;top:556px;width:55px;height:28px;line-height:29px;background:#fef9f6;"><span class="k">平</span>/<span class="k">半</span></div>
<div class="c" style="left:576px;top:556px;width:41px;height:28px;line-height:29px;background:#fef9f6;">1.05</div>
<div class="c" style="left:617px;top:556px;width:51px;height:28px;line-height:29px;background:#f0f7fb;">2.03</div>
<div class="c" style="left:668px;top:556px;width:51px;height:28px;line-height:29px;background:#f0f7fb;">3.71</div>
<div class="c" style="left:719px;top:556px;width:66px;height:28px;line-height:29px;background:#f0f7fb;">3.45</div>
<div class="c" style="left:785px;top:556px;width:35px;height:28px;line-height:29px;background:#f0f0f0;"><span class="g"><span class="k">負</span></span></div>
<div class="c" style="left:820px;top:556px;width:35px;height:28px;line-height:29px;background:#f0f0f0;"><span class="g"><span class="k">輸</span></span></div>
<div class="c" style="left:855px;top:556px;width:52px;height:28px;line-height:29px;background:#f0f0f0;border-right:0;"><span class="g"><span class="k">小</span></span></div>
<div class="c" style="left:0px;top:584px;width:63px;height:28px;line-height:29px;background:#990099;color:#fff;padding-right:1px;border-right-color:#d3dccf;"><span class="k">德甲</span></div>
<div class="c" style="left:63px;top:584px;width:68px;height:28px;line-height:29px;background:#fff;">26-01-24</div>
<div class="c" style="left:131px;top:584px;width:80px;height:28px;line-height:29px;background:#fff;color:#000;"><span class="k">美因茨</span>05</div>
<div class="c" style="left:211px;top:584px;width:78px;height:28px;line-height:29px;background:#fff;"><span class="r">3-1</span>(0-1)</div>
<div class="c" style="left:289px;top:584px;width:35px;height:28px;line-height:29px;background:#fff;">15-1</div>
<div class="c" style="left:324px;top:584px;width:158px;height:28px;line-height:29px;background:#fff;color:#007a00;"><span class="k">沃尔夫斯堡</span></div>
<div class="c" style="left:482px;top:584px;width:39px;height:28px;line-height:29px;background:#fef9f6;">1.00</div>
<div class="c" style="left:521px;top:584px;width:55px;height:28px;line-height:29px;background:#fef9f6;"><span class="k">平</span>/<span class="k">半</span></div>
<div class="c" style="left:576px;top:584px;width:41px;height:28px;line-height:29px;background:#fef9f6;">0.88</div>
<div class="c" style="left:617px;top:584px;width:51px;height:28px;line-height:29px;background:#f0f7fb;">2.32</div>
<div class="c" style="left:668px;top:584px;width:51px;height:28px;line-height:29px;background:#f0f7fb;">3.35</div>
<div class="c" style="left:719px;top:584px;width:66px;height:28px;line-height:29px;background:#f0f7fb;">3.07</div>
<div class="c" style="left:785px;top:584px;width:35px;height:28px;line-height:29px;background:#fff;"><span class="g"><span class="k">負</span></span></div>
<div class="c" style="left:820px;top:584px;width:35px;height:28px;line-height:29px;background:#fff;"><span class="g"><span class="k">輸</span></span></div>
<div class="c" style="left:855px;top:584px;width:52px;height:28px;line-height:29px;background:#fff;border-right:0;"><span class="r"><span class="k">大</span></span></div>
<div class="c" style="left:0px;top:612px;width:63px;height:28px;line-height:29px;background:#990099;color:#fff;padding-right:1px;border-right-color:#d3dccf;"><span class="k">德甲</span></div>
<div class="c" style="left:63px;top:612px;width:68px;height:28px;line-height:29px;background:#f0f0f0;">26-01-17</div>
<div class="c" style="left:131px;top:612px;width:80px;height:28px;line-height:29px;background:#f0f0f0;color:#007a00;"><span class="k">沃尔夫斯堡</span></div>
<div class="c" style="left:211px;top:612px;width:78px;height:28px;line-height:29px;background:#f0f0f0;"><span class="r">1-1</span>(0-1)</div>
<div class="c" style="left:289px;top:612px;width:35px;height:28px;line-height:29px;background:#f0f0f0;">9-6</div>
<div class="c" style="left:324px;top:612px;width:158px;height:28px;line-height:29px;background:#f0f0f0;color:#000;"><span class="k">海登海默</span></div>
<div class="c" style="left:482px;top:612px;width:39px;height:28px;line-height:29px;background:#fef9f6;">0.84</div>
<div class="c" style="left:521px;top:612px;width:55px;height:28px;line-height:29px;background:#fef9f6;"><span class="k">半</span>/<span class="k">一</span></div>
<div class="c" style="left:576px;top:612px;width:41px;height:28px;line-height:29px;background:#fef9f6;">1.04</div>
<div class="c" style="left:617px;top:612px;width:51px;height:28px;line-height:29px;background:#f0f7fb;">1.67</div>
<div class="c" style="left:668px;top:612px;width:51px;height:28px;line-height:29px;background:#f0f7fb;">4.05</div>
<div class="c" style="left:719px;top:612px;width:66px;height:28px;line-height:29px;background:#f0f7fb;">4.81</div>
<div class="c" style="left:785px;top:612px;width:35px;height:28px;line-height:29px;background:#f0f0f0;"><span class="b"><span class="k">平</span></span></div>
<div class="c" style="left:820px;top:612px;width:35px;height:28px;line-height:29px;background:#f0f0f0;"><span class="g"><span class="k">輸</span></span></div>
<div class="c" style="left:855px;top:612px;width:52px;height:28px;line-height:29px;background:#f0f0f0;border-right:0;"><span class="g"><span class="k">小</span></span></div>
<div class="c" style="left:0px;top:640px;width:63px;height:28px;line-height:29px;background:#990099;color:#fff;padding-right:1px;border-right-color:#d3dccf;"><span class="k">德甲</span></div>
<div class="c" style="left:63px;top:640px;width:68px;height:28px;line-height:29px;background:#fff;">26-01-15</div>
<div class="c" style="left:131px;top:640px;width:80px;height:28px;line-height:29px;background:#fff;color:#007a00;"><span class="k">沃尔夫斯堡</span></div>
<div class="c" style="left:211px;top:640px;width:78px;height:28px;line-height:29px;background:#fff;"><span class="r">2-1</span>(1-1)</div>
<div class="c" style="left:289px;top:640px;width:35px;height:28px;line-height:29px;background:#fff;">7-4</div>
<div class="c" style="left:324px;top:640px;width:158px;height:28px;line-height:29px;background:#fff;color:#000;"><span class="k">圣保利</span></div>
<div class="c" style="left:482px;top:640px;width:39px;height:28px;line-height:29px;background:#fef9f6;">0.84</div>
<div class="c" style="left:521px;top:640px;width:55px;height:28px;line-height:29px;background:#fef9f6;"><span class="k">半球</span></div>
<div class="c" style="left:576px;top:640px;width:41px;height:28px;line-height:29px;background:#fef9f6;">1.04</div>
<div class="c" style="left:617px;top:640px;width:51px;height:28px;line-height:29px;background:#f0f7fb;">1.85</div>
<div class="c" style="left:668px;top:640px;width:51px;height:28px;line-height:29px;background:#f0f7fb;">3.56</div>
<div class="c" style="left:719px;top:640px;width:66px;height:28px;line-height:29px;background:#f0f7fb;">4.33</div>
<div class="c" style="left:785px;top:640px;width:35px;height:28px;line-height:29px;background:#fff;"><span class="r"><span class="k">勝</span></span></div>
<div class="c" style="left:820px;top:640px;width:35px;height:28px;line-height:29px;background:#fff;"><span class="r"><span class="k">贏</span></span></div>
<div class="c" style="left:855px;top:640px;width:52px;height:28px;line-height:29px;background:#fff;border-right:0;"><span class="r"><span class="k">大</span></span></div>
<div class="c" style="left:0px;top:668px;width:63px;height:28px;line-height:29px;background:#990099;color:#fff;padding-right:1px;border-right-color:#d3dccf;"><span class="k">德甲</span></div>
<div class="c" style="left:63px;top:668px;width:68px;height:28px;line-height:29px;background:#f0f0f0;">26-01-12</div>
<div class="c" style="left:131px;top:668px;width:80px;height:28px;line-height:29px;background:#f0f0f0;color:#000;"><span class="k">拜仁慕尼黑</span></div>
<div class="c" style="left:211px;top:668px;width:78px;height:28px;line-height:29px;background:#f0f0f0;"><span class="r">8-1</span>(2-1)</div>
<div class="c" style="left:289px;top:668px;width:35px;height:28px;line-height:29px;background:#f0f0f0;">6-2</div>
<div class="c" style="left:324px;top:668px;width:158px;height:28px;line-height:29px;background:#f0f0f0;color:#007a00;"><span class="k">沃尔夫斯堡</span></div>
<div class="c" style="left:482px;top:668px;width:39px;height:28px;line-height:29px;background:#fef9f6;">0.95</div>
<div class="c" style="left:521px;top:668px;width:55px;height:28px;line-height:29px;background:#fef9f6;"><span class="k">两球半</span></div>
<div class="c" style="left:576px;top:668px;width:41px;height:28px;line-height:29px;background:#fef9f6;">0.93</div>
<div class="c" style="left:617px;top:668px;width:51px;height:28px;line-height:29px;background:#f0f7fb;">1.13</div>
<div class="c" style="left:668px;top:668px;width:51px;height:28px;line-height:29px;background:#f0f7fb;">9.76</div>
<div class="c" style="left:719px;top:668px;width:66px;height:28px;line-height:29px;background:#f0f7fb;">16.86</div>
<div class="c" style="left:785px;top:668px;width:35px;height:28px;line-height:29px;background:#f0f0f0;"><span class="g"><span class="k">負</span></span></div>
<div class="c" style="left:820px;top:668px;width:35px;height:28px;line-height:29px;background:#f0f0f0;"><span class="g"><span class="k">輸</span></span></div>
<div class="c" style="left:855px;top:668px;width:52px;height:28px;line-height:29px;background:#f0f0f0;border-right:0;"><span class="r"><span class="k">大</span></span></div>
<div class="c" style="left:0px;top:696px;width:63px;height:28px;line-height:29px;background:#03a7a7;color:#fff;padding-right:1px;border-right-color:#d3dccf;"><span class="k">球会友谊</span></div>
<div class="c" style="left:63px;top:696px;width:68px;height:28px;line-height:29px;background:#fff;">26-01-06</div>
<div class="c" style="left:131px;top:696px;width:80px;height:28px;line-height:29px;background:#fff;color:#007a00;"><span class="k">沃尔夫斯堡</span></div>
<div class="c" style="left:211px;top:696px;width:78px;height:28px;line-height:29px;background:#fff;"><span class="r">1-1</span>(1-1)</div>
<div class="c" style="left:289px;top:696px;width:35px;height:28px;line-height:29px;background:#fff;">5-8</div>
<div class="c" style="left:324px;top:696px;width:158px;height:28px;line-height:29px;background:#fff;color:#000;"><span class="k">埃斯特雷拉达阿马多拉</span></div>
<div class="c" style="left:482px;top:696px;width:39px;height:28px;line-height:29px;background:#fef9f6;"></div>
<div class="c" style="left:521px;top:696px;width:55px;height:28px;line-height:29px;background:#fef9f6;"></div>
<div class="c" style="left:576px;top:696px;width:41px;height:28px;line-height:29px;background:#fef9f6;"></div>
<div class="c" style="left:617px;top:696px;width:51px;height:28px;line-height:29px;background:#f0f7fb;"></div>
<div class="c" style="left:668px;top:696px;width:51px;height:28px;line-height:29px;background:#f0f7fb;"></div>
<div class="c" style="left:719px;top:696px;width:66px;height:28px;line-height:29px;background:#f0f7fb;"></div>
<div class="c" style="left:785px;top:696px;width:35px;height:28px;line-height:29px;background:#fff;"><span class="b"><span class="k">平</span></span></div>
<div class="c" style="left:820px;top:696px;width:35px;height:28px;line-height:29px;background:#fff;"><span class=""></span></div>
<div class="c" style="left:855px;top:696px;width:52px;height:28px;line-height:29px;background:#fff;border-right:0;"><span class=""></span></div>
<div class="c" style="left:0px;top:724px;width:63px;height:28px;line-height:29px;background:#990099;color:#fff;padding-right:1px;border-right-color:#d3dccf;"><span class="k">德甲</span></div>
<div class="c" style="left:63px;top:724px;width:68px;height:28px;line-height:29px;background:#f0f0f0;">25-12-20</div>
<div class="c" style="left:131px;top:724px;width:80px;height:28px;line-height:29px;background:#f0f0f0;color:#007a00;"><span class="k">沃尔夫斯堡</span></div>
<div class="c" style="left:211px;top:724px;width:78px;height:28px;line-height:29px;background:#f0f0f0;"><span class="r">3-4</span>(1-1)</div>
<div class="c" style="left:289px;top:724px;width:35px;height:28px;line-height:29px;background:#f0f0f0;">2-6</div>
<div class="c" style="left:324px;top:724px;width:158px;height:28px;line-height:29px;background:#f0f0f0;color:#000;"><span class="k">弗赖堡</span></div>
<div class="c" style="left:482px;top:724px;width:39px;height:28px;line-height:29px;background:#fef9f6;">1.07</div>
<div class="c" style="left:521px;top:724px;width:55px;height:28px;line-height:29px;background:#fef9f6;"><span class="k">平</span>/<span class="k">半</span></div>
<div class="c" style="left:576px;top:724px;width:41px;height:28px;line-height:29px;background:#fef9f6;">0.81</div>
<div class="c" style="left:617px;top:724px;width:51px;height:28px;line-height:29px;background:#f0f7fb;">2.48</div>
<div class="c" style="left:668px;top:724px;width:51px;height:28px;line-height:29px;background:#f0f7fb;">3.43</div>
<div class="c" style="left:719px;top:724px;width:66px;height:28px;line-height:29px;background:#f0f7fb;">2.79</div>
<div class="c" style="left:785px;top:724px;width:35px;height:28px;line-height:29px;background:#f0f0f0;"><span class="g"><span class="k">負</span></span></div>
<div class="c" style="left:820px;top:724px;width:35px;height:28px;line-height:29px;background:#f0f0f0;"><span class="g"><span class="k">輸</span></span></div>
<div class="c" style="left:855px;top:724px;width:52px;height:28px;line-height:29px;background:#f0f0f0;border-right:0;"><span class="r"><span class="k">大</span></span></div>
</body></html>
